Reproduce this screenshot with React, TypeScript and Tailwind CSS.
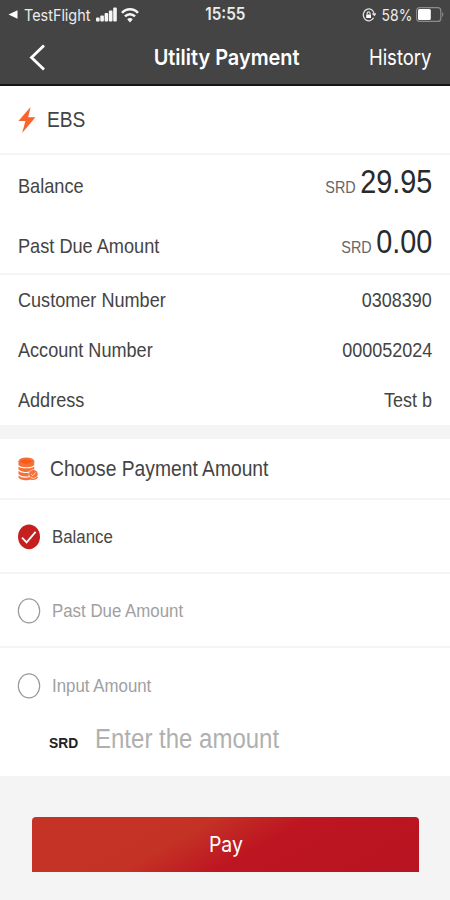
import React from 'react';
import { clsx } from 'clsx';

const details = [
  { label: 'Customer Number', value: '0308390' },
  { label: 'Account Number', value: '000052024' },
  { label: 'Address', value: 'Test b' },
];

const BoltIcon = () => (
  <svg className="w-[18px] h-[28px]" viewBox="0 0 18 28" fill="#f8642b">
    <path d="M12.6 1 0.4 15H7.4L4.2 27 17.4 11.2H10.2Z" />
  </svg>
);

const CoinsIcon = () => (
  <svg className="w-[20px] h-[24px]" viewBox="0 0 20 24">
    <path d="M0.5 4V20.3C1.5 24.3 14.8 24.3 16.2 20.3V4Z" fill="#f5713a" />
    <ellipse cx="8.4" cy="4.3" rx="7.9" ry="3.8" fill="#f5713a" />
    <ellipse cx="8.2" cy="4.5" rx="5.6" ry="2.2" fill="#f85a17" />
    <g fill="none" stroke="#fff" strokeWidth="1.1">
      <path d="M0 8.4C2.8 11.6 13.8 11.6 16.7 8.4" />
      <path d="M0 13C2.8 16 10 16 13 14.6" />
      <path d="M0 17.4C2.8 20.2 8 20.4 11.4 19.8" />
    </g>
    <ellipse cx="15.4" cy="17.4" rx="4.8" ry="4.8" fill="#fff" />
    <ellipse cx="15.4" cy="17" rx="4.4" ry="3.9" fill="#f5713a" />
    <path d="M13.3 17.3l1.5 1.4 2.9-3.2" stroke="#fff" strokeWidth="0.8" fill="none" />
    <path d="M11.6 20.4C13.2 23 17.8 23 19.5 19.8" stroke="#f5713a" strokeWidth="1.6" fill="none" />
  </svg>
);

const Radio = ({ checked }: { checked?: boolean }) => (
  <svg className="w-[24px] h-[27px] shrink-0" viewBox="0 0 24 27" fill="none">
    {checked ? (
      <>
        <ellipse cx="12" cy="13.8" rx="11" ry="12.4" fill="#c3201f" />
        <path d="M5 14.6 9.6 19.3 18.6 8.9" stroke="#fff" strokeWidth="1.8" />
      </>
    ) : (
      <ellipse cx="12" cy="13.8" rx="10.7" ry="12" stroke="#9a9a9a" strokeWidth="1.2" />
    )}
  </svg>
);

const StatusBar = () => (
  <div className="h-[29px] px-2 grid grid-cols-3 items-center text-[#ececec]">
    <div className="flex items-center">
      <svg className="w-[10px] h-[9px] shrink-0" viewBox="0 0 10 9" fill="#fff">
        <path d="M0.5 4.5 9.5 0.3V8.7Z" />
      </svg>
      <span className="w-[72px] ml-[6px] text-[16px] leading-none whitespace-nowrap">
        <span className="inline-block origin-left scale-x-[.9]">TestFlight</span>
      </span>
      <svg className="w-[21px] h-[15px] shrink-0" viewBox="0 0 21 15" fill="#f5f5f5">
        <rect x="0" y="10.5" width="3.6" height="4" rx="1" />
        <rect x="4.3" y="8.5" width="3.6" height="6" rx="1" />
        <rect x="8.6" y="6" width="3.6" height="8.5" rx="1" />
        <rect x="12.9" y="3.5" width="3.6" height="11" rx="1" />
        <rect x="17.2" y="0.5" width="3.6" height="14" rx="1" />
      </svg>
      <svg className="w-[18px] h-[16px] ml-1 shrink-0" viewBox="0 0 18 16" fill="none" stroke="#f5f5f5" strokeWidth="2.5">
        <path d="M1 5.8C5.4 1 12.6 1 17 5.8" />
        <path d="M4 9.4C6.8 6.4 11.2 6.4 14 9.4" />
        <path d="M9 15.5 6.2 12.2C7.8 10.7 10.2 10.7 11.8 12.2Z" fill="#f5f5f5" stroke="none" />
      </svg>
    </div>
    <div className="text-center text-[17px] font-semibold leading-none">
      <span className="inline-block scale-x-[.9]">15:55</span>
    </div>
    <div className="flex items-center justify-end -mr-[2px]">
      <svg className="w-[14px] h-[14px]" viewBox="0 0 14 14" fill="none" stroke="#dedede" strokeWidth="1.3">
        <path d="M11.6 9.8A5.5 6 0 1 1 12.3 6.4M10.4 5.6l2 1.8 1.4-2" />
        <rect x="4.2" y="6.4" width="4.8" height="3.6" rx="0.5" fill="#fff" stroke="none" />
        <path d="M5.2 6.5V5.2a1.4 1.4 0 0 1 2.8 0v1.3" />
      </svg>
      <span className="w-[36px] text-right text-[16px] leading-none">
        <span className="inline-block origin-right scale-x-[.87]">58%</span>
      </span>
      <svg className="w-[28px] h-[15px] ml-[4px]" viewBox="0 0 28 15">
        <rect x="0.6" y="0.6" width="24.2" height="13.8" rx="3" fill="none" stroke="#8c8c8c" strokeWidth="1.2" />
        <rect x="2" y="2" width="12.8" height="11" rx="1.5" fill="#fff" />
        <path d="M26.2 5c1.6.8 1.6 4.2 0 5Z" fill="#8c8c8c" />
      </svg>
    </div>
  </div>
);

const AmountRow = ({ label, value, className }: { label: string; value: string; className?: string }) => (
  <div className={clsx('flex items-baseline justify-between', className)}>
    <span className="inline-block origin-left scale-x-[.897] text-[20.25px]">{label}</span>
    <span className="inline-block origin-right scale-x-[.889] whitespace-nowrap">
      <span className="text-[16.2px] text-[#666] mr-[5px]">SRD</span>
      <span className="text-[32.4px] text-[#2a2a2a]">{value}</span>
    </span>
  </div>
);

const Option = ({ label, checked }: { label: string; checked?: boolean }) => (
  <div className="h-[74px] px-[17px] flex items-center">
    <Radio checked={checked} />
    <span
      className={clsx(
        'ml-[11px] mt-[2px] inline-block origin-left scale-x-[.892] text-[18.9px]',
        checked ? 'text-[#484848]' : 'text-[#a0a0a0]'
      )}
    >
      {label}
    </span>
  </div>
);

const App: React.FC = () => {
  return (
    <div className="w-[450px] h-[900px] overflow-hidden flex flex-col bg-[#f4f4f4] text-[#444] leading-none font-['Liberation_Sans',Arial,sans-serif]">
      <header className="h-[86px] bg-[#444] border-b-2 border-[#151515] text-white font-['Inter',sans-serif]">
        <StatusBar />
        <div className="h-[56px] pl-[29px] pr-[19px] grid grid-cols-[79px_1fr_85px] items-center">
          <svg className="w-[17px] h-[27px]" viewBox="0 0 17 27" fill="none" stroke="#fff" strokeWidth="2.8">
            <path d="M15 1.5 2.5 13.5 15 25.5" />
          </svg>
          <h1 className="text-center text-[22px] font-semibold whitespace-nowrap">
            <span className="inline-block scale-x-[.905]">Utility Payment</span>
          </h1>
          <span className="text-right text-[22px]">
            <span className="inline-block origin-right scale-x-[.84]">History</span>
          </span>
        </div>
      </header>

      <section className="bg-white">
        <div className="h-[69px] pl-[18px] flex items-center border-b-2 border-[#f4f4f4]">
          <BoltIcon />
          <span className="ml-[11px] inline-block origin-left scale-x-[.889] text-[21.6px]">EBS</span>
        </div>
        <div className="h-[120px] px-[18px] border-b-2 border-[#f4f4f4]">
          <AmountRow label="Balance" value="29.95" className="pt-[11px]" />
          <AmountRow label="Past Due Amount" value="0.00" className="pt-[28px]" />
        </div>
        <div className="h-[150px] px-[18px] text-[20.25px]">
          {details.map((item) => (
            <div key={item.label} className="h-[50px] flex items-center justify-between">
              <span className="inline-block origin-left scale-x-[.893]">{item.label}</span>
              <span className="inline-block origin-right scale-x-[.889]">{item.value}</span>
            </div>
          ))}
        </div>
      </section>

      <section className="mt-[14px] bg-white h-[337px]">
        <div className="h-[61px] pl-[18px] flex items-center border-b-2 border-[#f4f4f4]">
          <CoinsIcon />
          <span className="ml-[12px] inline-block origin-left scale-x-[.892] text-[21.6px]">
            Choose Payment Amount
          </span>
        </div>
        <div className="divide-y-2 divide-[#f4f4f4]">
          <Option label="Balance" checked />
          <Option label="Past Due Amount" />
          <Option label="Input Amount" />
        </div>
        <div className="pt-[4px] pl-[49px] flex items-baseline">
          <span className="w-[46px]">
            <span className="inline-block origin-left scale-x-[.889] text-[15.5px] font-bold text-[#222]">SRD</span>
          </span>
          <span className="inline-block origin-left scale-x-[.889] text-[27px] text-[#b0b0b0]">
            Enter the amount
          </span>
        </div>
      </section>

      <div className="pt-[41px] pl-8 pr-[31px]">
        <button className="w-full h-[55px] rounded-t-[4px] text-white text-[21.6px] bg-[linear-gradient(150deg,#c43426_0%,#c43225_38%,#bd1521_58%,#b91421_100%)] font-['Inter',sans-serif]">
          <span className="inline-block scale-x-[.9]">Pay</span>
        </button>
      </div>
    </div>
  );
};

export default App;
